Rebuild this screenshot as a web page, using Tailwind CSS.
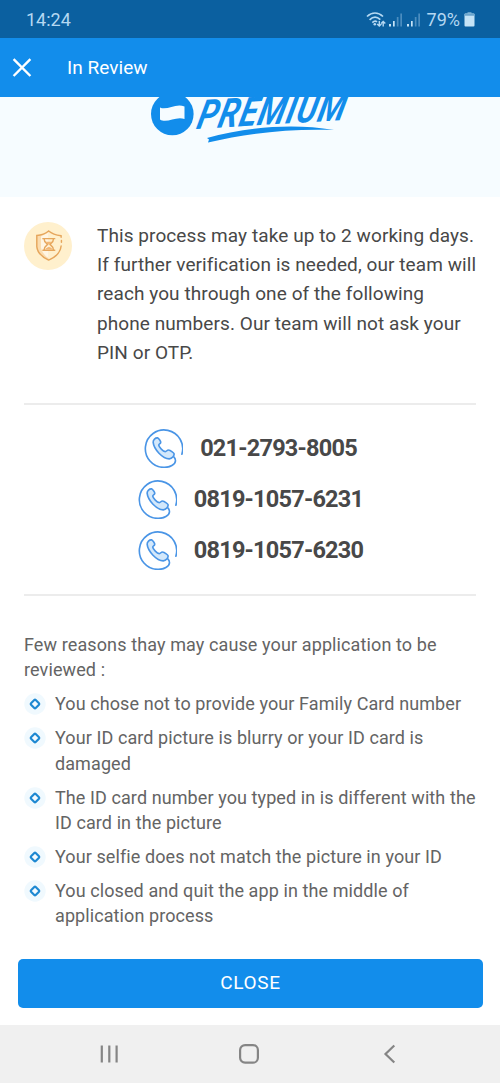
<!DOCTYPE html>
<html lang="en">
<head>
<meta charset="utf-8">
<title>In Review</title>
<script src="https://cdn.jsdelivr.net/npm/@tailwindcss/browser@4"></script>
</head>
<body class="bg-white font-['Roboto',sans-serif]">
<svg class="hidden">
  <symbol id="phone" viewBox="0 -1 119 119">
    <path d="M115.500 76A57 57 0 1 0 60 116C78 117 97 107 96 95C96 90 94 87 91 84" fill="none" stroke="#4a95e6" stroke-width="5" stroke-linecap="round"/>
    <path d="M28 40C27 32 35 25 42 26C45 28 52 36 51 40C50 44 45 45 45 48C46 55 58 67 65 68C69 68 71 62 75 63C80 64 91 71 92 75C92 81 86 89 77 90C57 90 30 61 28 40Z" fill="#d3e8fb" stroke="#4a95e6" stroke-width="5" stroke-linejoin="round"/>
  </symbol>
  <symbol id="bullet" viewBox="0 0 22 22">
    <circle cx="11" cy="11" r="10.700" fill="#f0f9fe"/>
    <rect x="7.700" y="7.700" width="6.600" height="6.600" rx="1" transform="rotate(45 11 11)" fill="#f5fbff" stroke="#1f89d2" stroke-width="2.200"/>
  </symbol>
</svg>
<div class="flex h-[1083px] w-[500px] flex-col overflow-hidden">
  <div class="flex h-[38px] shrink-0 items-center justify-between bg-[#0b60a0] pt-px pr-[25px] pl-[26px] text-lg leading-none text-[#b5d8f2]">
    <span>14:24</span>
    <div class="flex items-center">
      <svg class="h-[18px] w-[57px]" viewBox="0 0 57 18" fill="none">
        <g stroke="#b5d8f2" stroke-width="1.700">
          <path d="M1 5.500C6 .8 12 .8 17 5.500M3.600 8.800C7 5.500 11 5.500 14.300 8.600M6.300 11.600C8 10 10 10 11 11"/>
          <path d="M13.300 10v5M11.200 13l2.100 2.100l2.100-2.100M17.200 15.500v-5M15.100 12.500l2.100-2.100l2.100 2.100" stroke-width="1.400"/>
        </g>
        <circle cx="8.800" cy="13.200" r="1.300" fill="#b5d8f2"/>
        <path d="M23 13h2v2.500h-2zM27 10h1.700v5.500H27zM41 13h2v2.500h-2zM45 10h1.700v5.500H45z" fill="#c5e3f6"/>
        <path d="M30.800 6h1.700v9.500h-1.700zM34.300 2.500H36v13h-1.700zM48.800 6h1.700v9.500h-1.700zM52.300 2.500H54v13h-1.700z" fill="#4b8dbf"/>
      </svg>
      <span class="ml-1">79%</span>
      <svg class="mb-px ml-1 h-4 w-[11px]" viewBox="0 0 11 16"><path d="M3.500 1h4v2h-4z" fill="#5f9dc8"/><rect x=".5" y="2.500" width="10" height="13" rx="1" fill="#c5e3f6"/><path d="M.5 4.800V3.500a1 1 0 0 1 1-1h8a1 1 0 0 1 1 1V4.800z" fill="#6ba5cd"/></svg>
    </div>
  </div>
  <header class="flex h-[59px] shrink-0 items-center bg-[#128deb] pl-3 text-[19px] text-white">
    <svg class="h-5 w-5" viewBox="0 0 20 20"><path d="M1.600 1.200L18.400 18M18.400 1.200L1.600 18" stroke="#fff" stroke-width="2.400"/></svg>
    <h1 class="ml-[35px] pt-px tracking-[0.05px]">In Review</h1>
  </header>
  <section class="h-[100px] shrink-0 overflow-hidden bg-[#f6fcff]">
    <svg class="h-[100px] w-[500px]" viewBox="0 0 500 100" fill="#128deb">
      <circle cx="172.300" cy="17" r="21.300"/>
      <path d="M160 10.500C167 14 176 5.500 184.500 9.500V22C176 18.500 167 27 160 22.500Z" fill="#f6fcff"/>
      <g transform="translate(195.500 32) rotate(-3.500) skewX(-17)"><text x="0" y="0" font-family="Roboto" font-size="40" font-weight="700" font-style="italic" letter-spacing="1.500" textLength="149" lengthAdjust="spacingAndGlyphs">PREMIUM</text></g>
      <path d="M207 41C243 31 290 25.500 334 33C290 31.500 248 36 208 45.500L209 42.500Z"/>
    </svg>
  </section>
  <main class="flex flex-col px-6 pt-6">
    <div class="flex items-start">
      <svg class="mt-px h-12 w-12 shrink-0" viewBox="38 36 150 150" fill="none" stroke="#e6a65c" stroke-width="4.500" stroke-linecap="round">
        <circle cx="113" cy="111" r="75" fill="#fff0cd" stroke="none"/>
        <path d="M115 64C103 73 91 77 78 78V113C80 136 98 147 115 155Z" fill="#fbdcae" stroke="none"/>
        <path d="M115 68C107 73 98 78 91 81V116C95 134 105 143 115 149Z" fill="#fff5e3" stroke="none"/>
        <path d="M154 84V79C140 77 127 74 115 64C103 74 91 77 78 78V113C80 136 98 147 115 155C134 147 151 136 154 111M155 94v5"/>
        <path d="M97 88h37M97 124h37M101 89C101 101 109 102 112 106C109 110 101 112 101 123M130 89C130 101 122 102 119 106C122 110 130 112 130 123"/>
        <path d="M106 98h19l-9 8zM104 122C107 116 112 115 116 114C120 115 125 116 127 122z" fill="#f2b675" stroke="none"/>
      </svg>
      <p class="ml-[25px] text-[19px] leading-[29.2px] tracking-[0.08px] whitespace-nowrap text-[#484848]">This process may take up to 2 working days.<br>If further verification is needed, our team will<br>reach you through one of the following<br>phone numbers. Our team will not ask your<br>PIN or OTP.</p>
    </div>
    <div class="mt-9 flex flex-col items-center gap-3 border-y-2 border-[#ececec] pt-6 pb-6 text-[23.5px] leading-[39px] font-bold tracking-[-0.78px] text-[#484848]">
      <div class="flex gap-[17px] pl-px"><svg class="h-[39px] w-[39px]"><use href="#phone"/></svg><span>021-2793-8005</span></div>
      <div class="flex gap-[17px] pl-px"><svg class="h-[39px] w-[39px]"><use href="#phone"/></svg><span>0819-1057-6231</span></div>
      <div class="flex gap-[17px] pl-px"><svg class="h-[39px] w-[39px]"><use href="#phone"/></svg><span>0819-1057-6230</span></div>
    </div>
    <div class="mt-9 text-lg leading-[25.3px] tracking-[0.09px] whitespace-nowrap text-[#646464]">
      <p class="tracking-[0.11px]">Few reasons thay may cause your application to be<br>reviewed :</p>
      <ul class="mt-[8.7px] flex flex-col gap-[8.7px]">
        <li class="flex gap-[9px]"><svg class="mt-0.5 h-[22px] w-[22px]"><use href="#bullet"/></svg><span>You chose not to provide your Family Card number</span></li>
        <li class="flex gap-[9px]"><svg class="mt-0.5 h-[22px] w-[22px]"><use href="#bullet"/></svg><span>Your ID card picture is blurry or your ID card is<br>damaged</span></li>
        <li class="flex gap-[9px]"><svg class="mt-0.5 h-[22px] w-[22px]"><use href="#bullet"/></svg><span>The ID card number you typed in is different with the<br>ID card in the picture</span></li>
        <li class="flex gap-[9px]"><svg class="mt-0.5 h-[22px] w-[22px]"><use href="#bullet"/></svg><span>Your selfie does not match the picture in your ID</span></li>
        <li class="flex gap-[9px]"><svg class="mt-0.5 h-[22px] w-[22px]"><use href="#bullet"/></svg><span>You closed and quit the app in the middle of<br>application process</span></li>
      </ul>
    </div>
  </main>
  <footer class="mt-auto shrink-0">
    <button class="mr-[17px] mb-[17px] ml-[18px] flex h-[49px] w-[465px] items-center justify-center rounded-[5px] bg-[#128deb] text-[19px] tracking-[0.7px] text-white">CLOSE</button>
    <nav class="flex h-[58px] items-center justify-between bg-[#f0f0f0] pr-[100px] pl-[98px]">
      <svg class="h-5 w-5" viewBox="0 0 20 20"><path d="M3.800 1.500v17M11.300 1.500v17M18.600 1.500v17" stroke="#858585" stroke-width="2.200"/></svg>
      <svg class="h-5 w-5" viewBox="0 0 20 20"><rect x="1.100" y="1.100" width="17.800" height="17.600" rx="5" fill="none" stroke="#858585" stroke-width="2.200"/></svg>
      <svg class="h-5 w-5" viewBox="0 0 20 20"><path d="M14.300 1.500L5.500 10l8.800 8.500" fill="none" stroke="#858585" stroke-width="2.200"/></svg>
    </nav>
  </footer>
</div>
</body>
</html>
